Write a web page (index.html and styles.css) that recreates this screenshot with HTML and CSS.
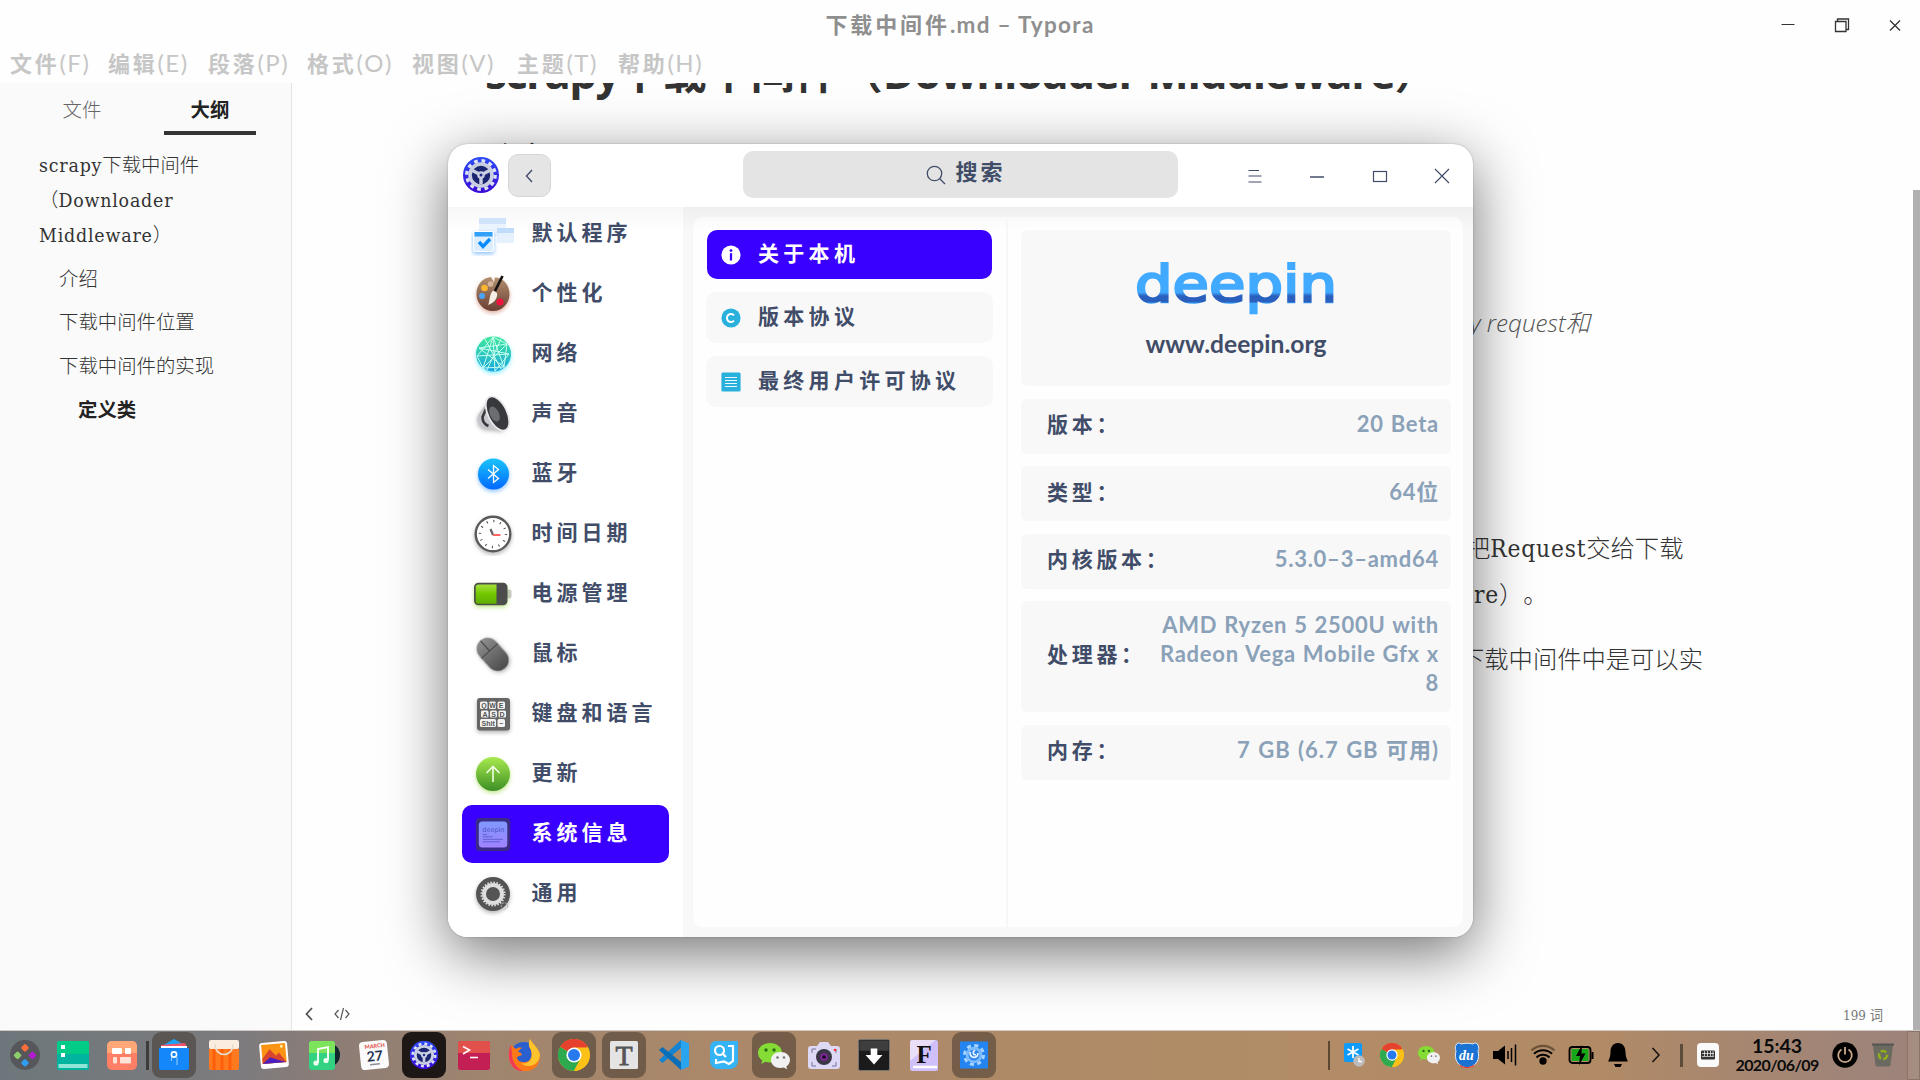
FILE: index.html
```html
<!DOCTYPE html>
<html lang="zh-CN">
<head>
<meta charset="utf-8">
<title>下载中间件.md – Typora</title>
<link rel="stylesheet" href="styles.css">
</head>
<body>
<svg class="defs" width="0" height="0">
  <defs>
    <linearGradient id="gBlue" x1="0" y1="0" x2="0" y2="1"><stop offset="0" stop-color="#19c4fb"/><stop offset="1" stop-color="#0068ff"/></linearGradient>
    <linearGradient id="gGear" x1="0" y1="0" x2="0" y2="1"><stop offset="0" stop-color="#2c4cf6"/><stop offset="1" stop-color="#3a0ad6"/></linearGradient>
    <linearGradient id="gGreen" x1="0" y1="0" x2="0" y2="1"><stop offset="0" stop-color="#a9ea4d"/><stop offset="1" stop-color="#3d8f26"/></linearGradient>
    <linearGradient id="gNet" x1="0" y1="0" x2="0" y2="1"><stop offset="0" stop-color="#3fe89a"/><stop offset="1" stop-color="#1aa6e0"/></linearGradient>
    <linearGradient id="gBrown" x1="0" y1="0" x2="0" y2="1"><stop offset="0" stop-color="#b2906f"/><stop offset="1" stop-color="#6a3f33"/></linearGradient>
    <linearGradient id="gGray" x1="0" y1="0" x2="0" y2="1"><stop offset="0" stop-color="#8f8f8f"/><stop offset="1" stop-color="#4b4b4b"/></linearGradient>
    <linearGradient id="gBatt" x1="0" y1="0" x2="0" y2="1"><stop offset="0" stop-color="#a5e33a"/><stop offset=".5" stop-color="#71c600"/><stop offset="1" stop-color="#5fae00"/></linearGradient>
    <linearGradient id="gScreen" x1="0" y1="0" x2="0" y2="1"><stop offset="0" stop-color="#7f98ff"/><stop offset="1" stop-color="#a183ff"/></linearGradient>
    <linearGradient id="gLogo" x1="0" y1="0" x2="0" y2="1"><stop offset="0" stop-color="#41a9ff"/><stop offset=".64" stop-color="#41a9ff"/><stop offset=".7" stop-color="#2a60bd"/><stop offset=".8" stop-color="#2a60bd"/><stop offset=".82" stop-color="#41a9ff"/><stop offset="1" stop-color="#41a9ff"/></linearGradient>
    <symbol id="gear" viewBox="0 0 36 36">
      <circle cx="18" cy="18" r="18" fill="url(#gGear)"/>
      <circle cx="18" cy="18" r="14.2" fill="none" stroke="#dde2f4" stroke-width="3.4" stroke-dasharray="3.7 3.74"/>
      <circle cx="18" cy="18" r="11" fill="#1c2670" stroke="#c9cfe0" stroke-width="3.6"/>
      <path d="M18 18V27M18 18L9.5 13.5M18 18L26.500 13.500" stroke="#c9cfe0" stroke-width="3.400"/>
      <circle cx="18" cy="18" r="3.800" fill="#c9cfe0"/><circle cx="18" cy="18" r="1.500" fill="#1c2a8a"/>
    </symbol>
    <symbol id="chrome" viewBox="0 0 32 32">
      <circle cx="16" cy="16" r="16" fill="#fbc116"/>
      <path d="M16 16L2.100 8A16 16 0 0 1 29.900 8Z" fill="#e6412f"/>
      <path d="M2.100 8A16 16 0 0 0 16 32L22.500 19.500 16 16Z" fill="#2da94f"/>
      <path d="M16 8.500H29.900A16 16 0 0 1 16 32L22.500 19.500Z" fill="#fbc116"/>
      <circle cx="16" cy="16" r="7.600" fill="#fff"/><circle cx="16" cy="16" r="6" fill="#2779ee"/>
    </symbol>
    <symbol id="wechat" viewBox="0 0 32 28">
      <path d="M12 1C5 1 0 5.500 0 11c0 3.200 1.700 5.800 4.300 7.600L3.200 22l4.200-2.200c1.500.5 3 .7 4.600.7 7 0 12-4.400 12-9.700S19 1 12 1Z" fill="#84dc35"/>
      <circle cx="8" cy="8" r="1.700" fill="#2c6c14"/><circle cx="16" cy="8" r="1.700" fill="#2c6c14"/>
      <path d="M22.500 10C17 10 13 13.500 13 18s4 8 9.500 8c1.200 0 2.300-.2 3.300-.5l3.400 1.800-.9-2.900c2.200-1.500 3.700-3.700 3.700-6.400 0-4.500-4-8-9.500-8Z" fill="#f1f1f1"/>
      <circle cx="19.500" cy="15.500" r="1.300" fill="#777"/><circle cx="26" cy="15.500" r="1.300" fill="#777"/>
    </symbol>
  </defs>
</svg>

<div class="desktop">
  <div class="typora">
    <header class="titlebar">
      <h1 class="title">下载中间件<span class="title-latin">.md – Typora</span></h1>
      <div class="win-controls">
        <svg width="14" height="16" viewBox="0 0 14 16"><path d="M.5 7.500H13.500" stroke="#333"/></svg>
        <svg width="16" height="16" viewBox="0 0 16 16" fill="none" stroke="#333" stroke-width="1.300"><path d="M1.500 4.500H12V14.500H1.500ZM3.500 4.500V2H14.500V12.500H12"/></svg>
        <svg width="14" height="16" viewBox="0 0 14 16"><path d="M2 3.500L12 13.500M12 3.500L2 13.500" stroke="#333" stroke-width="1.300"/></svg>
      </div>
    </header>
    <nav class="menubar">
      <span>文件<i>(F)</i></span><span>编辑<i>(E)</i></span><span>段落<i>(P)</i></span><span>格式<i>(O)</i></span><span>视图<i>(V)</i></span><span>主题<i>(T)</i></span><span>帮助<i>(H)</i></span>
    </nav>
    <div class="workspace">
      <aside class="outline">
        <div class="tabs"><span class="tab">文件</span><span class="tab active">大纲</span></div>
        <ul class="tree">
          <li><b class="lat">scrapy</b>下载中间件<br>（<b class="lat">Downloader</b><br><b class="lat">Middleware</b>）</li>
          <li class="l2">介绍</li>
          <li class="l2">下载中间件位置</li>
          <li class="l2">下载中间件的实现</li>
          <li class="l3">定义类</li>
        </ul>
      </aside>
      <main class="document">
        <article class="article">
          <h2 class="doc-h1"><span class="h-a">scrapy</span>下载中间件（<span class="h-b">Downloader Middleware</span>）</h2>
          <h3 class="doc-h2">介绍</h3>
          <blockquote class="quote">y request和</blockquote>
          <p class="para p1">把<span class="lat">Request</span>交给下载</p>
          <p class="para p2"><span class="lat">re</span>）。</p>
          <p class="para p3">下载中间件中是可以实</p>
        </article>
        <footer class="statusbar">
          <svg width="8" height="14" viewBox="0 0 8 14"><path d="M7 1L1.500 7L7 13" fill="none" stroke="#555" stroke-width="1.800"/></svg>
          <svg width="16" height="14" viewBox="0 0 16 14"><path d="M4.500 3L1 7l3.500 4M11.500 3L15 7l-3.500 4M9.500 1L6.500 13" fill="none" stroke="#555" stroke-width="1.200"/></svg>
          <span class="count">199 词</span>
        </footer>
        <div class="scrollbar"></div>
      </main>
    </div>
  </div>

  <section class="settings">
    <header class="s-head">
      <svg class="s-logo" width="36" height="36"><use href="#gear"/></svg>
      <button class="back"><svg width="10" height="16" viewBox="0 0 10 16"><path d="M7 2L1.500 8L7 14" fill="none" stroke="#414d68" stroke-width="1.400"/></svg></button>
      <div class="search">
        <svg width="20" height="20" viewBox="0 0 20 20" fill="none" stroke="#414d68" stroke-width="1.300"><circle cx="8.500" cy="8.500" r="7.200"/><path d="M13.500 13.500L19 19"/></svg>
        <span>搜索</span>
      </div>
      <div class="s-controls">
        <svg width="16" height="16" viewBox="0 0 16 16"><path d="M1.500 2.500H12M1.500 8H14.500M1.500 14H14.500" stroke="#414d68" stroke-width="1.200"/></svg>
        <svg width="16" height="16" viewBox="0 0 16 16"><path d="M1 9H15" stroke="#414d68" stroke-width="1.300"/></svg>
        <svg width="16" height="16" viewBox="0 0 16 16"><rect x="1.500" y="3.500" width="13" height="10" fill="none" stroke="#414d68" stroke-width="1.200"/></svg>
        <svg width="16" height="16" viewBox="0 0 16 16"><path d="M1 1L15 15M15 1L1 15" stroke="#414d68" stroke-width="1.200"/></svg>
      </div>
    </header>
    <div class="s-body">
      <ul class="modules">
        <li><svg class="mi" viewBox="0 0 44 44"><rect x="8" y="6" width="27" height="18" fill="#eaf3fe"/><rect x="8" y="6" width="27" height="6" fill="#cfe4fb"/><rect x="26" y="16" width="17" height="15" rx="1.500" fill="#e6f1fe"/><rect x="26" y="16" width="17" height="5" fill="#bfdcfb"/><rect x="2.500" y="19.500" width="20" height="20" rx="1.500" fill="#dceefe" stroke="#fff" class="glow-blue"/><rect x="3.500" y="20" width="18" height="4.500" fill="#31a0f8"/><path d="M8 30l4 4.500L19 27" fill="none" stroke="#078bff" stroke-width="3.400"/></svg><span>默认程序</span></li>
        <li><svg class="mi" viewBox="0 0 44 44"><path d="M20 5C11 6 5.500 13 5.500 22c0 9.500 7.500 17 16.500 17s16.500-7.500 16.500-17C38.500 13 32 5.500 24 5.500l-1 5.500Z" fill="url(#gBrown)" class="glow-brown"/><circle cx="13.500" cy="16" r="3.300" fill="#fdb62f"/><circle cx="19.500" cy="12" r="2.800" fill="#d9b49c"/><circle cx="11" cy="24" r="3" fill="#4da3f5"/><circle cx="29" cy="30" r="3.500" fill="#f0123f"/><path d="M31.500 4L24 19" stroke="#111" stroke-width="2.600"/><path d="M22 18.500l4 2.500c1 5-3 10-9 12 2-4 1-10 5-14.500Z" fill="#f5f0e6"/></svg><span>个性化</span></li>
        <li><svg class="mi" viewBox="0 0 44 44"><circle cx="22.500" cy="22" r="17.500" fill="url(#gNet)" class="glow-cyan"/><g fill="none" stroke="#c6fff0" stroke-width="1"><path d="M22 5L12 36L36 12L8 16L33 35L22 5L24 39L38 22L8 16M22 5L36 12L33 35L12 36L6 24L22 5M6 24L38 22M30 7L16 38M14 7L30 37"/></g></svg><span>网络</span></li>
        <li><svg class="mi" viewBox="0 0 44 44"><path d="M17 9L7 23c-2 5 0 11 6 13l20 2Z" fill="#c6c6cb" class="glow-gray"/><path d="M15 17L11.500 25c0 5 2 7.500 6 9" fill="none" stroke="#39393c" stroke-width="2.600"/><ellipse cx="26.500" cy="21.500" rx="9.500" ry="18.500" transform="rotate(-26 26.500 21.500)" fill="#38393c" stroke="#e8e8ea" stroke-width="1.800"/><ellipse cx="23.500" cy="22" rx="4.500" ry="8" transform="rotate(-26 23.500 22)" fill="#6c6d72"/></svg><span>声音</span></li>
        <li><svg class="mi" viewBox="0 0 44 44"><circle cx="22.500" cy="22" r="15.500" fill="url(#gBlue)" class="glow-blue"/><path d="M17 17.500L27.500 26.500L22.500 30.500V13.500L27.500 17.500L17 26.500" fill="none" stroke="#fff" stroke-width="1.300"/></svg><span>蓝牙</span></li>
        <li><svg class="mi" viewBox="0 0 44 44"><circle cx="22" cy="22" r="17.300" fill="#fff" stroke="#5a5a5a" stroke-width="2.400" class="glow-gray"/><circle cx="22" cy="22" r="13" fill="none" stroke="#444" stroke-width="2.400" stroke-dasharray="1 5.807"/><path d="M22 23L19.500 17" stroke="#666" stroke-width="2.200"/><path d="M22 23H29.500" stroke="#f55" stroke-width="1.800"/></svg><span>时间日期</span></li>
        <li><svg class="mi" viewBox="0 0 44 44"><rect x="36" y="17.500" width="4.500" height="9" rx="2" fill="#c9c9c9"/><rect x="3" y="10.800" width="33.500" height="22.500" rx="4.500" fill="#4c4c4c" class="glow-green"/><path d="M7.500 12.500H25.500V31.700H7.500a2.800 2.800 0 0 1-2.800-2.800V15.300a2.800 2.800 0 0 1 2.800-2.800Z" fill="url(#gBatt)"/></svg><span>电源管理</span></li>
        <li><svg class="mi" viewBox="0 0 44 44"><g transform="rotate(-42 22 22)"><rect x="10.500" y="3.500" width="22" height="37" rx="11" fill="url(#gGray)" class="glow-gray"/><path d="M10.500 17.500H32.500M21.500 4V17.500" stroke="#4a4a4a" stroke-width="1.200"/></g></svg><span>鼠标</span></li>
        <li><svg class="mi" viewBox="0 0 44 44"><rect x="6" y="6" width="33" height="32.500" rx="3" fill="#666" class="glow-gray"/><g fill="#f2f2f2"><rect x="9" y="9.500" width="7.500" height="7.500" rx="1.500"/><rect x="18" y="9.500" width="7" height="7.500" rx="1.500"/><rect x="26.500" y="9.500" width="7.500" height="7.500" rx="1.500"/><rect x="10" y="18.500" width="7.500" height="7" rx="1.500"/><rect x="19" y="18.500" width="7" height="7" rx="1.500"/><rect x="27.500" y="18.500" width="7.500" height="7" rx="1.500"/><rect x="9" y="27" width="16" height="8" rx="1.500"/><rect x="26.500" y="27" width="7.500" height="8" rx="1.500"/></g><g class="keys"><text x="10.300" y="16">Q</text><text x="18.300" y="16">W</text><text x="27.800" y="16">E</text><text x="11.500" y="24.700">A</text><text x="20.200" y="24.700">S</text><text x="28.500" y="24.700">D</text><text x="10.500" y="34">Shit</text><text x="28.300" y="33">–</text></g></svg><span>键盘和语言</span></li>
        <li><svg class="mi" viewBox="0 0 44 44"><circle cx="22" cy="22" r="17" fill="url(#gGreen)" class="glow-green"/><path d="M22 30V15M15.500 21l6.500-6.500L28.500 21" fill="none" stroke="#f0ffe4" stroke-width="1.600"/></svg><span>更新</span></li>
        <li class="on"><svg class="mi" viewBox="0 0 44 44"><rect x="4.800" y="6" width="34.500" height="33" rx="4" fill="#3a2b86"/><rect x="7.800" y="9.500" width="28.500" height="26" rx="3.500" fill="url(#gScreen)"/><text class="mini-logo" x="11.300" y="19.500">deepin</text><path d="M11.800 22.500H16M11.800 24.800H21.500M11.800 27.300H32M11.800 29.800H29" stroke="#5b5ad0" stroke-width=".9"/></svg><span>系统信息</span></li>
        <li><svg class="mi" viewBox="0 0 44 44"><circle cx="22" cy="22" r="17" fill="#545454" class="glow-gray"/><circle cx="22" cy="22" r="11.600" fill="none" stroke="#e2e2e2" stroke-width="1.800" stroke-dasharray="1.500 1.537"/><circle cx="22" cy="22" r="9" fill="none" stroke="#dedede" stroke-width="4"/><circle cx="33.500" cy="34" r="3.200" fill="none" stroke="#b5b5b5" stroke-dasharray="2 1"/></svg><span>通用</span></li>
      </ul>
      <div class="content">
        <ul class="pages">
          <li class="on"><svg width="20" height="20" viewBox="0 0 20 20"><circle cx="10" cy="10" r="9.600" fill="#fff"/><circle cx="10" cy="5.600" r="1.400" fill="#3a00ff"/><rect x="8.900" y="8.200" width="2.200" height="7.300" fill="#3a00ff"/></svg><span>关于本机</span></li>
          <li><svg width="20" height="20" viewBox="0 0 20 20"><circle cx="10" cy="10" r="9.600" fill="#29b0dc"/><path d="M13 7.400a4 4 0 1 0 0 5.200" fill="none" stroke="#fff" stroke-width="2"/></svg><span>版本协议</span></li>
          <li><svg width="20" height="20" viewBox="0 0 20 20"><rect x=".4" y=".4" width="19.200" height="19.200" rx="1.500" fill="#29b0dc"/><path d="M4 5.500H16M4 8.500H16M4 11.500H16M4 14.500H16" stroke="#eafaff" stroke-width="1.200"/></svg><span>最终用户许可协议</span></li>
        </ul>
        <div class="about">
          <div class="card brand">
            <svg class="wordmark" width="202" height="56" viewBox="0 0 202 56"><text x="0" y="40" textLength="202" lengthAdjust="spacingAndGlyphs">deepin</text></svg>
            <a class="url">www.deepin.org</a>
          </div>
          <div class="card row"><span class="k">版本：</span><span class="v">20 Beta</span></div>
          <div class="card row"><span class="k">类型：</span><span class="v">64位</span></div>
          <div class="card row"><span class="k">内核版本：</span><span class="v">5.3.0–3–amd64</span></div>
          <div class="card row tall"><span class="k">处理器：</span><span class="v">AMD Ryzen 5 2500U with<br>Radeon Vega Mobile Gfx x<br>8</span></div>
          <div class="card row"><span class="k">内存：</span><span class="v mem">7 GB (6.7 GB 可用)</span></div>
        </div>
      </div>
    </div>
  </section>

  <footer class="dock">
    <div class="fixed">
      <svg viewBox="0 0 32 32"><circle cx="16" cy="16" r="15" fill="#55575a"/><g transform="rotate(45 16 16)"><rect x="8" y="8" width="6" height="6" rx="1.200" fill="#ff6f3c"/><rect x="18.500" y="8" width="6" height="6" rx="1.200" fill="#b41ad2"/><rect x="8" y="18.500" width="6" height="6" rx="1.200" fill="#8fce6a"/><rect x="18.500" y="18.500" width="6" height="6" rx="1.200" fill="#2f9df0"/></g></svg>
      <svg viewBox="0 0 32 32"><rect x="0" y="2" width="32" height="29" rx="2" fill="#00b4a0"/><path d="M0 4a2 2 0 0 1 2-2H30a2 2 0 0 1 2 2V15H0Z" fill="#00cc88"/><rect x="4" y="6" width="4" height="4" fill="#fff"/><rect x="4" y="14" width="4" height="4" fill="#fff"/><rect x="1.500" y="25" width="29" height="4" fill="#8ee6d6"/></svg>
      <svg viewBox="0 0 32 32"><rect x="1" y="2" width="30" height="29" rx="5" fill="#ff7e66"/><path d="M1 14V7a5 5 0 0 1 5-5H26a5 5 0 0 1 5 5V14Z" fill="#ffa777"/><rect x="6" y="9" width="10" height="6" rx="1" fill="#fff"/><rect x="19" y="9" width="6" height="6" rx="1" fill="#fff"/><rect x="7" y="18" width="4" height="6.500" rx="1" fill="#ffe3d8"/><rect x="14" y="18" width="11" height="6.500" rx="1" fill="#ffe3d8"/></svg>
    </div>
    <span class="sep"></span>
    <div class="apps">
      <span class="app open"><svg viewBox="0 0 32 32"><path d="M2 8L16 0L30 8Z" fill="#19a3f6"/><path d="M3 6L27 4L29 9H3Z" fill="#f2546e"/><rect x="3" y="7" width="26" height="5" fill="#fff"/><path d="M1 9H31V29a2 2 0 0 1-2 2H3a2 2 0 0 1-2-2Z" fill="#1487fb"/><circle cx="16" cy="15.500" r="2.600" fill="none" stroke="#fff" stroke-width="1.600"/><path d="M13.500 18V22M19 18V26" stroke="#9fd0ff"/></svg></span>
      <span class="app"><svg viewBox="0 0 32 32"><rect x="1" y="9" width="30" height="22" rx="2" fill="#ff7a1e"/><path d="M6 9V31M14 9V31M22 9V31" stroke="#ff5e0a" stroke-width="3"/><rect x="1" y="1" width="30" height="9" rx="2" fill="#fbeee0"/><path d="M7 5C7 19 25 19 25 5" fill="none" stroke="#e9dccc" stroke-width="1.600"/></svg></span>
      <span class="app"><svg viewBox="0 0 32 32"><g transform="rotate(-5 16 16)"><rect x="2" y="3" width="28" height="26" rx="3" fill="#fff"/><rect x="4" y="5" width="24" height="19" fill="#fb9415"/><path d="M4 24V19l8-9 6 7 3-3 7 10Z" fill="#d7452f"/><path d="M4 24l8-6 7 3 9 3Z" fill="#4a1fc0"/><circle cx="24" cy="8" r="1.500" fill="#ffeaa0"/></g></svg></span>
      <span class="app"><svg viewBox="0 0 32 32"><circle cx="20" cy="16" r="12" fill="#10262c"/><rect x="1" y="2" width="26" height="29" rx="3" fill="#32d282"/><path d="M1 14V5a3 3 0 0 1 3-3H24a3 3 0 0 1 3 3V14Z" fill="#7be45a"/><path d="M10 24V10L20 8V21" fill="none" stroke="#fff" stroke-width="1.800"/><circle cx="8" cy="24" r="2.600" fill="#eafff0"/><circle cx="18" cy="21.500" r="2.600" fill="#eafff0"/></svg></span>
      <span class="app"><svg viewBox="0 0 32 32"><g transform="rotate(-6 16 16)"><rect x="2" y="2" width="28" height="28" rx="4" fill="#fbfbfb"/><text class="cal-m" x="7.500" y="9">MARCH</text><text class="cal-d" x="8.500" y="22">27</text><rect x="11" y="24.500" width="10" height="1.500" fill="#8a8f98"/></g></svg></span>
      <span class="app black"><svg viewBox="0 0 36 36"><use href="#gear" x="2" y="2" width="32" height="32"/></svg></span>
      <span class="app"><svg viewBox="0 0 32 32"><rect x="0" y="2" width="32" height="29" rx="2.500" fill="#c41f55"/><path d="M0 14V4.500A2.500 2.500 0 0 1 2.500 2H29.500A2.500 2.500 0 0 1 32 4.500V14Z" fill="#e2504c"/><path d="M5 7.500L11.500 11L5 15M12 18.500H20" fill="none" stroke="#fff" stroke-width="1.600"/></svg></span>
      <span class="app"><svg viewBox="0 0 32 32"><circle cx="16" cy="17" r="14" fill="#2a5fd0"/><path d="M3 6C-2 16 1 32 16 32.500 27 32.500 32 25 32 16 31 9 25 6 22 0c-2 5-1 8 1 11 2 8-2 13-8 12-3 0-6-2-6-5l5-2c-1-3-3-3-4-3 1-2 2-3 4-4-3-1-5 0-6 1Z" fill="#ff7a17"/><path d="M22 0c-2 5-1 8 1 11 3 9-3 15-10 13 6 6 18 3 19-8C31 9 25 6 22 0Z" fill="#ffc42b"/><path d="M3 6C-2 16 1 32 16 32.500 8 29 4 22 4 15Z" fill="#f23a55"/></svg></span>
      <span class="app open"><svg viewBox="0 0 32 32"><use href="#chrome" x="0" y="0" width="32" height="32"/></svg></span>
      <span class="app open"><svg viewBox="0 0 32 32"><rect x="2" y="2" width="28" height="28" rx="1.500" fill="#e4e4e4"/><text class="ty" x="7.500" y="25.500">T</text></svg></span>
      <span class="app"><svg viewBox="0 0 32 32"><path d="M23 1L31 4.500V27.500L23 31Z" fill="#2aa4ee"/><path d="M23 1V9L4.500 24L1 21Z" fill="#1583cf"/><path d="M23 31V23L4.500 8L1 11Z" fill="#0a6db8"/></svg></span>
      <span class="app"><svg viewBox="0 0 32 32"><path d="M8 2H30V22a8 8 0 0 1-8 8H10a8 8 0 0 1-8-8V8a6 6 0 0 1 6-6Z" fill="#34b3f5"/><circle cx="11.500" cy="11.500" r="4.500" fill="none" stroke="#fff" stroke-width="2.200"/><path d="M15 15l3 3M20 7H25V22L21 25L16 22.500L8 24V20" fill="none" stroke="#fff" stroke-width="2.200"/></svg></span>
      <span class="app open"><svg viewBox="0 0 32 32"><use href="#wechat" x="0" y="3" width="32" height="28"/></svg></span>
      <span class="app"><svg viewBox="0 0 32 32"><path d="M3 7H9L12 3H20L23 7H29a3 3 0 0 1 3 3V27a3 3 0 0 1-3 3H3a3 3 0 0 1-3-3V10A3 3 0 0 1 3 7Z" fill="#ddd8f4"/><path d="M4 14V10H8M28 14V10M4 23V27H8M28 23V27H24" fill="none" stroke="#77719c"/><circle cx="16" cy="18" r="8" fill="#3a3645"/><circle cx="16" cy="18" r="4" fill="#7b2592"/><circle cx="16" cy="18" r="1.800" fill="#120c1c"/><circle cx="27" cy="11" r="1.300" fill="#f33"/></svg></span>
      <span class="app"><svg viewBox="0 0 34 34"><rect x=".5" y=".5" width="33" height="33" rx="2" fill="#1b1b1b" stroke="#777"/><rect x="1.500" y="1.500" width="31" height="11" fill="#3e3e3e"/><path d="M13.500 10H20.500V17H26L17 27L8 17H13.500Z" fill="#fff"/></svg></span>
      <span class="app"><svg viewBox="0 0 32 32"><rect x="2" y="1" width="28" height="31" rx="2.500" fill="#cfc0fb"/><path d="M2 16V3.500A2.500 2.500 0 0 1 4.500 1H27.500L2 22Z" fill="#eadff8"/><path d="M5 28H29" stroke="#fff" stroke-width="2.500"/><text class="fm" x="8.500" y="24">F</text></svg></span>
      <span class="app open"><svg viewBox="0 0 32 32"><rect x="2" y="2.500" width="28" height="27" fill="#2484f0"/><circle cx="16" cy="16" r="9.500" fill="none" stroke="#a9d4ff" stroke-width="3" stroke-dasharray="4 3.460"/><circle cx="16" cy="16" r="8.300" fill="#7dbcff"/><circle cx="16" cy="16" r="5.500" fill="#2f86ec"/><path d="M12 13c0 7 8 7 8 1M17 11c-3 2-2 5 1 5" fill="none" stroke="#e8f5ff" stroke-width="1.700"/></svg></span>
    </div>
    <span class="sep thin"></span>
    <div class="tray">
      <svg viewBox="0 0 28 28"><rect x="4" y="2" width="18" height="19" rx="2" fill="#0f9bfb"/><path d="M13 5V17M7.500 8L18.500 14M18.500 8L7.500 14" stroke="#fff" stroke-width="1.800"/><circle cx="19" cy="20" r="5.800" fill="#bcbcbc"/><path d="M19 17V20.500H22" fill="none" stroke="#fff" stroke-width="1.300"/></svg>
      <svg viewBox="0 0 28 28"><use href="#chrome" x="2" y="2" width="24" height="24"/></svg>
      <svg viewBox="0 0 28 28"><use href="#wechat" x="3" y="4" width="22" height="20"/></svg>
      <svg viewBox="0 0 28 28"><path d="M3 4a3 3 0 0 1 5-1c4-1 8-1 12 0a3 3 0 0 1 5 1c1 3 1 4 0 6 2 8-1 15-11 17C4 25 1 18 3 10 2 8 2 6 3 4Z" fill="#1a72d2" stroke="#dceafa"/><path d="M6 23c4 4 12 4 16 0l-2 3-6 1.500L8 26Z" fill="#e33c2e"/><text class="du" x="6" y="18.500">du</text></svg>
      <svg viewBox="0 0 28 28"><path d="M2 10H7L14 4.500V23.500L7 18H2Z"/><path d="M17 10V18M20.500 7V21M24.500 3.500V24.500" stroke="#000" stroke-width="1.500"/></svg>
      <svg viewBox="0 0 28 28" fill="none" stroke="#000" stroke-width="2.100"><circle cx="14" cy="20" r="2.600" fill="#000"/><path d="M7.500 16.500a9 9 0 0 1 13 0"/><path d="M5 12.800a13 13 0 0 1 18 0"/><path d="M2.500 9.500a16.500 16.500 0 0 1 23 0" stroke="#6b5338"/></svg>
      <svg viewBox="0 0 28 28"><rect x="2.500" y="6" width="21" height="16" rx="3" fill="#b08b66" stroke="#000" stroke-width="1.800"/><rect x="4.500" y="8" width="17" height="12" fill="#17a81a"/><path d="M25.500 11V18" stroke="#000" stroke-width="2"/><path d="M15 4L9 15H13L12 24.500L18.500 12.500H14.500Z"/></svg>
      <svg viewBox="0 0 28 28"><path d="M14 2c5 0 7.500 4 7.500 9 0 4 1 7 2.500 9.500H4C5.500 18 6.500 15 6.500 11c0-5 2.500-9 7.500-9ZM10 23H18L16.500 26H11.500Z"/></svg>
      <svg viewBox="0 0 28 28"><path d="M10.500 7L17 14L10.500 21" fill="none" stroke="#111" stroke-width="1.500"/></svg>
    </div>
    <span class="sep mid"></span>
    <svg class="ime" viewBox="0 0 22 24"><rect x="0" y="0" width="22" height="24" rx="4" fill="#fafafa"/><rect x="4" y="7.500" width="14" height="9" rx="1" fill="#333"/><path d="M5 10.500H17M5 13.500H17M7.500 8V13M10.500 8V13M13.500 8V13M16 8V13" stroke="#fafafa" stroke-width=".7"/></svg>
    <div class="clock"><span class="time">15:43</span><span class="date">2020/06/09</span></div>
    <svg class="power" viewBox="0 0 26 26"><circle cx="13" cy="13" r="12.700"/><path d="M9.500 7.500a6.800 6.800 0 1 0 7 0M13 5V12.500" fill="none" stroke="#c9a888" stroke-width="1.800"/></svg>
    <svg class="trash" viewBox="0 0 22 24"><path d="M1 2H21L18.500 22a2 2 0 0 1-2 1.500H5.500a2 2 0 0 1-2-1.500Z" fill="#6a6a60"/><path d="M0 1.500H22" stroke="#555" stroke-width="2"/><circle cx="11" cy="12" r="4" fill="none" stroke="#8fae1c" stroke-width="2.600" stroke-dasharray="6 2"/></svg>
    <span class="show-desktop"></span>
  </footer>
</div>
</body>
</html>
```
FILE: styles.css
```css
* { box-sizing: border-box; }
body { margin: 0; width: 1920px; height: 1080px; overflow: hidden; background: #fff; text-spacing-trim: space-all; }
ul { list-style: none; margin: 0; padding: 0; }
h1, h2, h3, p, blockquote { margin: 0; font-weight: inherit; }
svg { display: block; flex: none; }
svg text { user-select: none; }
.defs { position: absolute; }
.desktop { position: relative; width: 1920px; height: 1080px; display: flex; flex-direction: column; }

/* ---------- editor ---------- */
.typora { height: 1030px; display: flex; flex-direction: column; background: #fefefe; }
.titlebar { height: 50px; display: grid; grid-template-columns: 1fr auto 1fr; align-items: center; }
.title { grid-column: 2; margin-top: -4px; font: 700 22px "Lato", "Noto Sans CJK SC", sans-serif; color: #8f8f8f; letter-spacing: 2.900px; white-space: nowrap; }
.title-latin { font-size: 22.500px; letter-spacing: 1.300px; }
.win-controls { display: flex; justify-content: flex-end; gap: 38.500px; padding-right: 18px; }
.menubar { height: 33px; padding-left: 10px; display: grid; grid-template-columns: 98px 100px 99px 105px 105px 101px 100px; align-items: center; font: 700 22px "Noto Sans CJK SC", sans-serif; color: #c6c6c6; line-height: 28px; white-space: nowrap; }
.menubar span { margin-top: -9px; letter-spacing: 2.700px; }
.menubar i { font: 400 24px/24px "Lato", sans-serif; letter-spacing: 1.500px; }
.workspace { flex: 1; display: flex; min-height: 0; }
.lat { font-family: "DejaVu Serif Condensed", "DejaVu Serif", serif; font-weight: 400; line-height: 1; letter-spacing: .8px; }

.outline { width: 292px; background: #fafafa; border-right: 1px solid #e4e4e4; font: 300 19.400px/35px "Noto Sans CJK SC", sans-serif; color: #333; }
.tabs { height: 52px; display: flex; padding-left: 36px; gap: 36px; }
.tab { width: 92px; height: 52px; line-height: 52px; text-align: center; color: #666; }
.tab.active { font-weight: 700; color: #222; border-bottom: 4px solid #333; }
.tree { padding: 11px 0 0 39px; }
.tree li { margin-bottom: 8.700px; }
.tree .l2 { padding-left: 20px; }
.tree .l3 { padding-left: 39px; font-weight: 700; color: #222; }

.document { position: relative; flex: 1; display: flex; flex-direction: column; }
.article { flex: 1; overflow: hidden; font: 300 24.300px/46px "Noto Sans CJK SC", sans-serif; color: #333; white-space: nowrap; }
.doc-h1 { height: 60px; margin: -41px 0 0 193px; font: 700 44px/60px "Open Sans", "Noto Sans CJK SC", sans-serif; }
.h-a { letter-spacing: -1.700px; }
.h-b { letter-spacing: -1.300px; }
.doc-h2 { height: 50px; margin: 31px 0 0 195px; font: 700 36px/50px "Noto Sans CJK SC", sans-serif; }
.quote { width: 1298px; margin: 116.500px 0 0; text-align: right; font-family: "Open Sans", "Noto Sans CJK SC", sans-serif; font-style: italic; color: #555; }
.p1 { margin: 178.500px 0 0 1174px; }
.p2 { margin: 0 0 0 1182px; }
.p3 { margin: 18.500px 0 0 1168px; }
.statusbar { height: 32px; display: flex; align-items: center; gap: 21px; padding: 0 37px 0 13px; font: 14px "Noto Sans CJK SC", sans-serif; color: #777; }
.count { margin-left: auto; font-family: "DejaVu Serif Condensed", "Noto Sans CJK SC", serif; font-size: 13.300px; }
.scrollbar { position: absolute; right: 0; top: 107px; bottom: 0; width: 7px; background: #b0b0b0; }

/* ---------- settings window ---------- */
.settings { position: absolute; left: 448px; top: 144px; width: 1025px; height: 793px; border-radius: 20px; overflow: hidden; background: #fff; display: flex; flex-direction: column; font: 700 21px "Lato", "Noto Sans CJK SC", sans-serif; color: #414d68; box-shadow: 0 0 2px rgba(0,0,0,.25), 0 16px 60px rgba(0,0,0,.55); }
.s-head { height: 63px; display: flex; align-items: center; padding: 0 23px 0 15px; }
.s-logo { margin-top: -2px; }
.back { margin: 0 192px 0 9px; width: 43px; height: 43px; padding: 0; border: 1px solid #d6d6d6; border-radius: 10px; background: #e5e5e5; display: grid; place-items: center; }
.search { width: 435px; height: 47px; margin-top: -2px; padding-left: 11px; border-radius: 10px; background: #e4e4e4; display: flex; align-items: center; justify-content: center; gap: 9px; letter-spacing: 3px; }
.search span { margin-top: -10px; font-size: 22px; }
.s-controls { margin-left: auto; display: flex; gap: 46.500px; }
.s-body { flex: 1; display: flex; min-height: 0; background: linear-gradient(#efefef, #f8f8f8 24px); }
.modules { width: 235px; padding: 0 14px; background: linear-gradient(#f7f7f7, #fff 24px); }
.modules li { height: 58px; margin-bottom: 2px; padding-left: 10px; display: flex; align-items: center; gap: 16.500px; border-radius: 10px; letter-spacing: 4px; white-space: nowrap; line-height: 50px; padding-bottom: 2px; }
.modules span { margin-top: -2px; }
.modules li:first-child { margin-top: -2px; }
.modules .on { background: #3a00ff; color: #fff; }
.mi { width: 44px; height: 44px; margin: 2px 0 0 -1px; }
.keys text { font: 700 7px "Liberation Sans", sans-serif; letter-spacing: 0; fill: #555; }
.mini-logo { font: 400 6.500px "DejaVu Sans", sans-serif; letter-spacing: 0; fill: #4b53c8; }
.glow-blue { filter: drop-shadow(0 2px 2px rgba(0,120,255,.45)); }
.glow-brown { filter: drop-shadow(0 2px 2px rgba(180,70,40,.45)); }
.glow-cyan { filter: drop-shadow(0 2px 2px rgba(0,220,255,.45)); }
.glow-green { filter: drop-shadow(0 2px 2px rgba(120,200,0,.45)); }
.glow-gray { filter: drop-shadow(0 2px 2px rgba(0,0,0,.3)); }

.content { flex: 1; margin: 10px; display: flex; border-radius: 10px; background: linear-gradient(#fafafa, #fefefe 14px); }
.pages { width: 315px; padding: 13px 13px; border-right: 2px solid #f7f7f7; display: flex; flex-direction: column; gap: 13px; }
.pages li { height: 51px; padding: 0 0 0 15px; display: flex; align-items: center; gap: 17px; border-radius: 10px; background: #f8f8f8; letter-spacing: 4.300px; white-space: nowrap; }
.pages span { margin-top: -6px; }
.pages .on { height: 49px; margin: 0 1px 0 1px; padding-left: 14px; background: #3a00ff; color: #fff; }
.about { flex: 1; padding: 13px 12px 0 13px; display: flex; flex-direction: column; gap: 12.600px; }
.card { border-radius: 6px; background: #f8f8f8; }
.brand { height: 156px; display: flex; flex-direction: column; align-items: center; padding-top: 32px; }
.wordmark text { font: 400 52px "DejaVu Sans", sans-serif; fill: url(#gLogo); stroke: url(#gLogo); stroke-width: 2.400px; }
.url { margin-top: 11px; font-size: 24.600px; line-height: 30px; }
.row { height: 55px; padding: 0 12px 5px 26px; display: flex; align-items: center; justify-content: space-between; line-height: 29px; }
.tall { height: 111px; padding-bottom: 6px; }
.k { letter-spacing: 3.700px; white-space: nowrap; }
.v { color: #8aa1b8; font-size: 22px; text-align: right; letter-spacing: .75px; word-spacing: .8px; white-space: nowrap; }
.mem { letter-spacing: 1px; word-spacing: 1px; }

/* ---------- dock ---------- */
.dock { height: 50px; border-top: 1px solid #cfcac6; padding-bottom: 1px; display: flex; align-items: center; background: linear-gradient(90deg, #6d777b 0, #7d7b7e 240px, #8d7d75 340px, #9f856f 480px, #ab8869 720px, #b18c66 1300px, #b18a66 1600px, #9f8478 1850px, #9c837a 1920px); }
.fixed { display: flex; gap: 16.500px; padding-left: 8.500px; }
.fixed svg, .app svg { width: 32px; height: 32px; }
.sep { width: 3px; height: 29px; margin: 0 3px 0 8.500px; background: #3e3b3b; }
.apps { display: flex; gap: 6px; }
.app { width: 44px; height: 46px; border-radius: 9px; display: grid; place-items: center; }
.app.open { background: rgba(60,50,42,.5); }
.app.black { background: #1d1815; }
.cal-m { font: 700 5.500px "Lato", sans-serif; fill: #e04a44; }
.cal-d { font: 700 14px "Lato", sans-serif; fill: #24344f; }
.ty { font: 400 28px "Liberation Serif", serif; fill: #555; stroke: #555; stroke-width: .8px; }
.fm { font: 700 25px "Liberation Serif", serif; fill: #111; }
.du { font: italic 700 14px "Liberation Serif", serif; fill: #fff; }
.sep.thin { width: 2px; margin: 0 5px 0 332px; background: #5c4732; }
.tray { display: flex; }
.tray svg { width: 28px; height: 28px; margin: 0 4.900px; }
.sep.mid { height: 23px; margin: 0 14px 0 5px; background: #5c4a3a; }
.ime { width: 22px; height: 24px; }
.clock { width: 100px; margin: 0 0 0 8px; display: flex; flex-direction: column; align-items: center; font: 700 18px/19px "Lato", sans-serif; color: #0b0b0b; }
.time { font-size: 19.500px; }
.date { font-size: 16px; letter-spacing: -.6px; }
.power { width: 26px; height: 26px; margin-left: 5px; }
.trash { width: 22px; height: 24px; margin-left: 14px; }
.show-desktop { margin-left: auto; width: 13px; height: 49px; border: 1px solid #8a7468; background: #a58d82; }
```
